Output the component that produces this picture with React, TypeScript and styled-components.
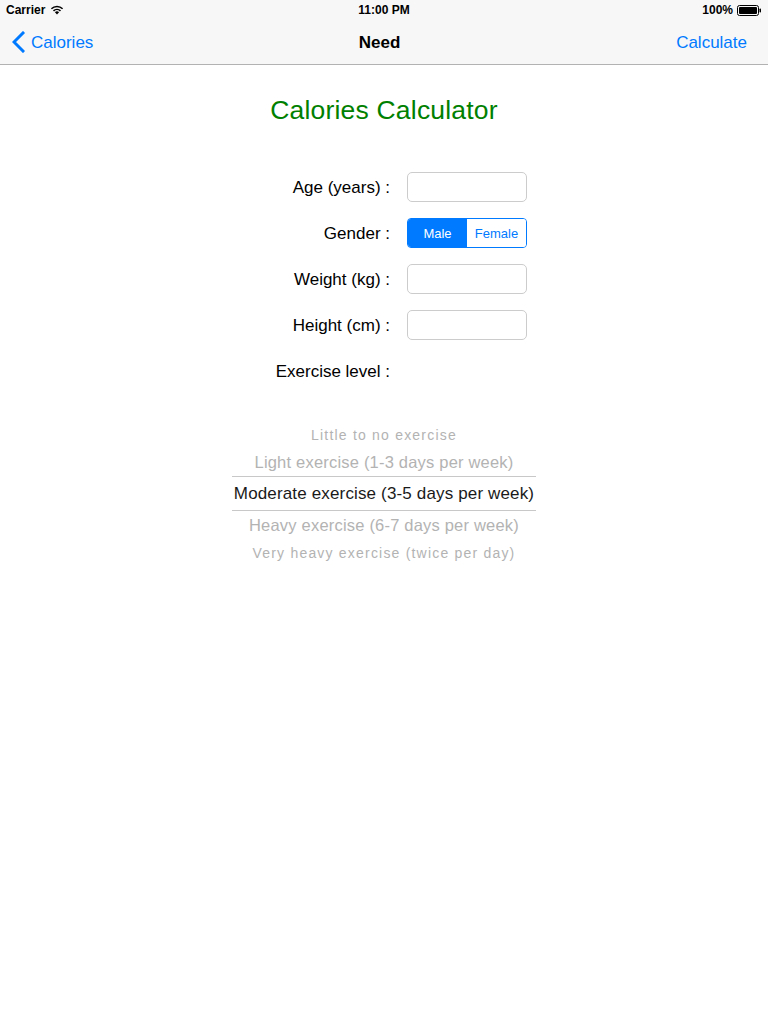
import React, { FC } from "react";
import styled, { createGlobalStyle } from "styled-components";

const GlobalStyle = createGlobalStyle`
  html, body {
    margin: 0;
    padding: 0;
    background: #ffffff;
    font-family: "Liberation Sans", Arial, sans-serif;
  }
`;

const levels = [
  "Little to no exercise",
  "Light exercise (1-3 days per week)",
  "Moderate exercise (3-5 days per week)",
  "Heavy exercise (6-7 days per week)",
  "Very heavy exercise (twice per day)",
];

const WifiIcon: FC = () => (
  <svg width="14" height="10" viewBox="0 0 14 10">
    <path d="M7 9.5 L4.9 7.3 A3 3 0 0 1 9.1 7.3 Z" fill="#000" />
    <path d="M3.5 5.9 A5 5 0 0 1 10.5 5.9" stroke="#000" strokeWidth="1.5" fill="none" />
    <path d="M1.4 3.7 A8 8 0 0 1 12.6 3.7" stroke="#000" strokeWidth="1.5" fill="none" />
  </svg>
);

const BatteryIcon: FC = () => (
  <svg width="25" height="11" viewBox="0 0 25 11">
    <rect x="0.5" y="0.5" width="21" height="10" rx="2" fill="none" stroke="#000" />
    <rect x="2" y="2" width="18" height="7" rx="1" fill="#000" />
    <rect x="22.5" y="3.5" width="1.5" height="4" rx="0.7" fill="#000" />
  </svg>
);

const ChevronLeft: FC = () => (
  <svg width="13" height="22" viewBox="0 0 13 22">
    <path d="M11 2 L2 11 L11 20" stroke="#007aff" strokeWidth="3" fill="none" strokeLinecap="square" />
  </svg>
);

const App: FC = () => {
  return (
    <>
      <GlobalStyle />
      <Page>
        <TopBars>
          <StatusBar>
            <StatusLeft>
              Carrier <WifiIcon />
            </StatusLeft>
            <StatusTime>11:00 PM</StatusTime>
            <StatusRight>
              100% <BatteryIcon />
            </StatusRight>
          </StatusBar>
          <NavBar>
            <NavBack>
              <ChevronLeft />
              <NavText>Calories</NavText>
            </NavBack>
            <NavTitle>Need</NavTitle>
            <NavAction>Calculate</NavAction>
          </NavBar>
        </TopBars>

        <Title>Calories Calculator</Title>

        <Form>
          <Label>Age (years) :</Label>
          <Field />
          <Label>Gender :</Label>
          <Segmented>
            <Segment active>Male</Segment>
            <Segment>Female</Segment>
          </Segmented>
          <Label>Weight (kg) :</Label>
          <Field />
          <Label>Height (cm) :</Label>
          <Field />
          <Label>Exercise level :</Label>
          <div />
        </Form>

        <Picker>
          {levels.map((level, idx) => (
            <PickerRow key={idx} offset={idx - 2}>
              {level}
            </PickerRow>
          ))}
        </Picker>
      </Page>
    </>
  );
};

const Page = styled.div`
  width: 768px;
  min-height: 1024px;
  background: #fff;
  display: flex;
  flex-direction: column;
`;

const TopBars = styled.div`
  background: #f7f7f7;
  border-bottom: 1px solid #b2b2b2;
`;

const StatusBar = styled.div`
  height: 20px;
  display: grid;
  grid-template-columns: 1fr auto 1fr;
  align-items: center;
  padding: 0 6px;
  font-size: 12px;
  font-weight: bold;
  color: #000;
`;

const StatusLeft = styled.div`
  display: flex;
  align-items: center;
  gap: 5px;
`;

const StatusTime = styled.div`
  text-align: center;
`;

const StatusRight = styled.div`
  display: flex;
  align-items: center;
  justify-content: flex-end;
  gap: 4px;
`;

const NavBar = styled.div`
  height: 44px;
  display: grid;
  grid-template-columns: 1fr auto 1fr;
  align-items: center;
  padding: 0 21px 0 12px;
  font-size: 17px;
`;

const NavBack = styled.div`
  display: flex;
  align-items: center;
  gap: 6px;
  color: #007aff;
`;

const NavText = styled.span`
  padding-top: 2px;
`;

const NavTitle = styled.div`
  padding-top: 2px;
  font-weight: bold;
  color: #000;
`;

const NavAction = styled.div`
  padding-top: 2px;
  text-align: right;
  color: #007aff;
`;

const Title = styled.h1`
  margin: 30px 0 0;
  font-size: 26.5px;
  line-height: 30px;
  letter-spacing: 0.2px;
  font-weight: normal;
  color: #008000;
  text-align: center;
`;

const Form = styled.div`
  margin-top: 47px;
  display: grid;
  grid-template-columns: 390px 120px;
  grid-auto-rows: 30px;
  column-gap: 17px;
  row-gap: 16px;
`;

const Label = styled.div`
  text-align: right;
  align-self: center;
  padding-top: 2px;
  font-size: 17px;
  color: #000;
`;

const Field = styled.div`
  box-sizing: border-box;
  height: 30px;
  border: 1px solid #cccccc;
  border-radius: 5px;
  background: #fff;
`;

const Segmented = styled.div`
  box-sizing: border-box;
  height: 30px;
  display: grid;
  grid-template-columns: 1fr 1fr;
  border: 1px solid #007aff;
  border-radius: 4px;
  overflow: hidden;
`;

const Segment = styled.div<{ active?: boolean }>`
  display: flex;
  align-items: center;
  justify-content: center;
  font-size: 13px;
  background: ${(p) => (p.active ? "#007aff" : "#fff")};
  color: ${(p) => (p.active ? "#fff" : "#007aff")};
`;

const Picker = styled.div`
  align-self: center;
  width: 304px;
  margin-top: 35px;
  display: flex;
  flex-direction: column;
`;

// the wheel: rows further from the selection are shorter, smaller and wider spaced
const rowHeights: Record<number, number> = { 0: 35, 1: 28, 2: 27 };
const rowSizes: Record<number, number> = { 0: 17, 1: 16.5, 2: 14 };
const rowSpacing: Record<number, number> = { 0: 0.15, 1: 0.2, 2: 1.2 };

const PickerRow = styled.div<{ offset: number }>`
  box-sizing: border-box;
  height: ${(p) => rowHeights[Math.abs(p.offset)]}px;
  display: flex;
  align-items: center;
  justify-content: center;
  white-space: nowrap;
  font-size: ${(p) => rowSizes[Math.abs(p.offset)]}px;
  letter-spacing: ${(p) => rowSpacing[Math.abs(p.offset)]}px;
  color: ${(p) => (p.offset === 0 ? "#1a1a1a" : "#b3b3b3")};
  border-top: ${(p) => (p.offset === 0 ? "1px solid #c8c8c8" : "none")};
  border-bottom: ${(p) => (p.offset === 0 ? "1px solid #c8c8c8" : "none")};
`;

export default App;
